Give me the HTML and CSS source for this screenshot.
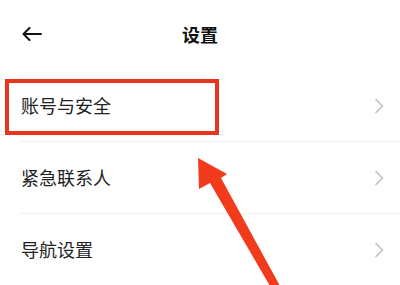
FILE: index.html
```html
<!DOCTYPE html>
<html lang="zh-CN">
<head>
<meta charset="utf-8">
<title>设置</title>
<link rel="stylesheet" href="styles.css">
</head>
<body>
<div class="page">
  <header class="topbar">
    <div class="back">
      <svg width="20" height="14" viewBox="0 0 20 14"><path d="M19 7H1.5M7.5 1L1.5 7l6 6" fill="none" stroke="#111" stroke-width="2" stroke-linecap="round" stroke-linejoin="round"/></svg>
    </div>
    <h1 class="title">设置</h1>
    <div></div>
  </header>
  <ul class="list">
    <li class="row"><span class="label">账号与安全</span><svg class="chev" width="10" height="16" viewBox="0 0 10 16"><path d="M1.5 1l7 7-7 7" fill="none" stroke="#bdbdbd" stroke-width="1.4"/></svg></li>
    <li class="row"><span class="label">紧急联系人</span><svg class="chev" width="10" height="16" viewBox="0 0 10 16"><path d="M1.5 1l7 7-7 7" fill="none" stroke="#bdbdbd" stroke-width="1.4"/></svg></li>
    <li class="row"><span class="label">导航设置</span><svg class="chev" width="10" height="16" viewBox="0 0 10 16"><path d="M1.5 1l7 7-7 7" fill="none" stroke="#bdbdbd" stroke-width="1.4"/></svg></li>
  </ul>
  <div class="highlight"></div>
  <svg class="pointer" width="400" height="285" viewBox="0 0 400 285">
    <polygon points="198,158 227,174 221,178 280,286 270,286 210,183 199,189" fill="#f23a1c"/>
  </svg>
</div>
</body>
</html>
```

FILE: styles.css
```css
* { box-sizing: border-box; }
html, body { margin: 0; padding: 0; background: #fff; }
body { font-family: "Noto Sans CJK SC", "Noto Sans", sans-serif; color: #222; }
.page { position: relative; width: 400px; height: 285px; overflow: hidden; }
.topbar {
  height: 70px;
  display: grid;
  grid-template-columns: 1fr auto 1fr;
  align-items: center;
  padding: 0 22px;
}
.back { display: flex; align-items: center; height: 14px; margin-top: -2px; }
.title {
  margin: 0;
  font-size: 18px;
  font-weight: 700;
  color: #111;
  line-height: 1;
  margin-top: -3px;
}
.list { list-style: none; margin: 0; padding: 0; }
.row {
  height: 72px;
  margin-left: 20px;
  padding: 0 16px 0 1px;
  display: flex;
  align-items: center;
  justify-content: space-between;
  border-bottom: 1px solid #f0f0f0;
}
.label { font-size: 18px; line-height: 1; color: #222; margin-top: -1px; }
.chev { display: block; margin-top: 1px; }
.highlight {
  position: absolute;
  left: 5px;
  top: 79px;
  width: 214px;
  height: 56px;
  border: 4.5px solid #e8361d;
}
.pointer { position: absolute; left: 0; top: 0; }
```
